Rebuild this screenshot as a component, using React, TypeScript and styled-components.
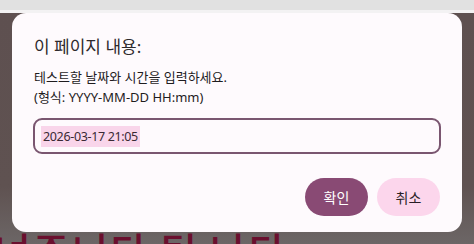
import styled, { createGlobalStyle } from 'styled-components';

const Global = createGlobalStyle`
  html, body { margin: 0; padding: 0; }
  body {
    width: 474px;
    height: 244px;
    overflow: hidden;
    font-family: 'Noto Sans', 'Noto Sans CJK KR', sans-serif;
  }
`;

const Screen = styled.div`
  position: relative;
  width: 474px;
  height: 244px;
  overflow: hidden;
  display: flex;
  flex-direction: column;
`;

const TabBar = styled.div`
  height: 10px;
  background: #e1e1e1;
  flex-shrink: 0;
`;

const TabEdge = styled.div`
  height: 3px;
  background: #f3f2f3;
  flex-shrink: 0;
`;

const Page = styled.div`
  flex: 1;
  background: linear-gradient(#5e5050 0%, #5f5251 75%, #6c6666 100%);
  display: flex;
  flex-direction: column;
  justify-content: flex-end;
`;

const Headline = styled.div`
  font-family: 'Noto Sans CJK KR', sans-serif;
  font-size: 40px;
  line-height: 40px;
  font-weight: 500;
  color: #6a0f2e;
  white-space: nowrap;
  margin: 0 0 -26px -6px;
  letter-spacing: 2px;
`;

const Dialog = styled.div`
  position: absolute;
  left: 12px;
  top: 13px;
  width: 450px;
  height: 219px;
  box-sizing: border-box;
  background: #fefafd;
  border-radius: 14px;
  padding: 23px 21px 0 22px;
  display: flex;
  flex-direction: column;
`;

const Title = styled.div`
  font-size: 17px;
  line-height: 21px;
  color: #2e2a2d;
  margin-bottom: 10px;
`;

const Message = styled.div`
  font-size: 13px;
  line-height: 20px;
  color: #1f1c1e;
`;

const Field = styled.div`
  margin: 11px 0 0 -1px;
  height: 36px;
  box-sizing: border-box;
  border: 2px solid #7a5670;
  border-radius: 9px;
  display: flex;
  align-items: center;
  padding: 0 6px;
`;

const Selected = styled.span`
  font-size: 12.5px;
  line-height: 21px;
  letter-spacing: -0.35px;
  color: #3a2a34;
  background: #f9d5ea;
  padding: 0 2px;
`;

const Actions = styled.div`
  margin-top: 24px;
  display: flex;
  justify-content: flex-end;
  gap: 9px;
  padding-right: 1px;
`;

const Pill = styled.button<{ $primary?: boolean }>`
  width: 63px;
  height: 38px;
  border: none;
  border-radius: 19px;
  font-family: 'Noto Sans CJK KR', sans-serif;
  font-size: 14px;
  background: ${(p) => (p.$primary ? '#894a74' : '#fcd6ec')};
  color: ${(p) => (p.$primary ? '#ffffff' : '#2a1f26')};
  cursor: pointer;
`;

export default function App() {
  return (
    <Screen>
      <Global />
      <TabBar />
      <TabEdge />
      <Page>
        <Headline>녀주니다 팀 나다</Headline>
      </Page>
      <Dialog>
        <Title>이 페이지 내용:</Title>
        <Message>
          테스트할 날짜와 시간을 입력하세요.
          <br />
          (형식: YYYY-MM-DD HH:mm)
        </Message>
        <Field>
          <Selected>2026-03-17 21:05</Selected>
        </Field>
        <Actions>
          <Pill $primary>확인</Pill>
          <Pill>취소</Pill>
        </Actions>
      </Dialog>
    </Screen>
  );
}
